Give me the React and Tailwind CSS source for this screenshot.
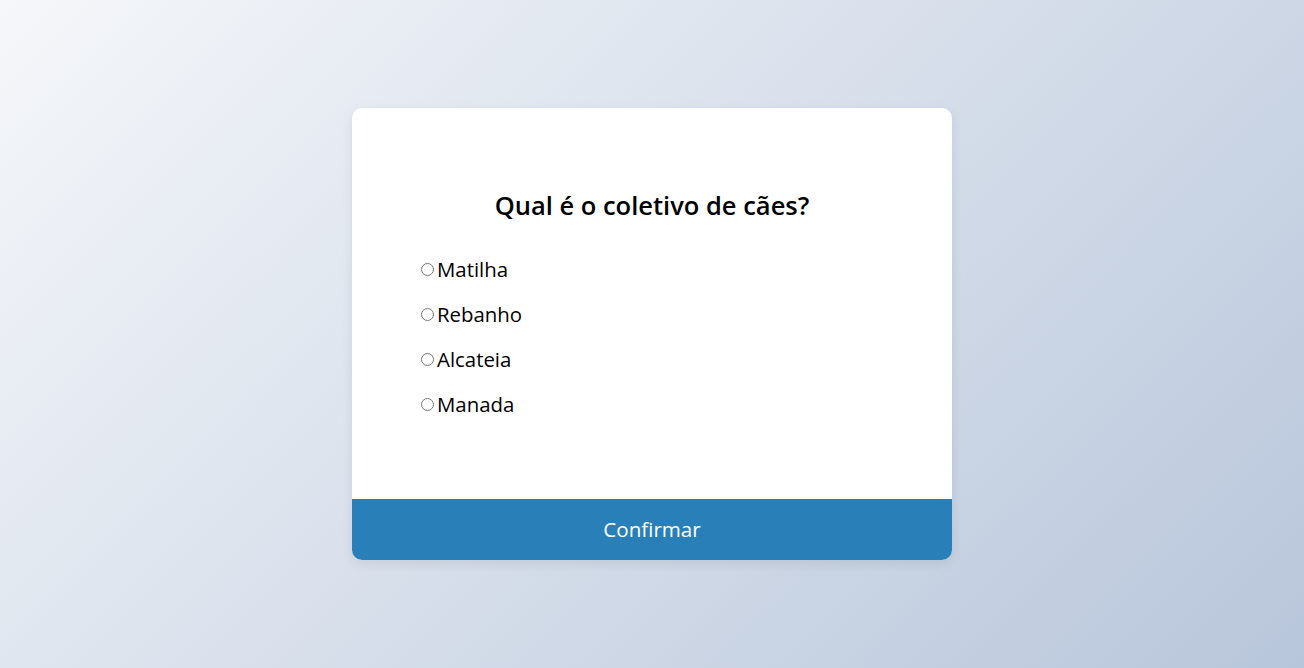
import React from "react";

const options = ["Matilha", "Rebanho", "Alcateia", "Manada"];

export default function App() {
  return (
    <div
      className="min-h-screen w-full flex items-center justify-center bg-[linear-gradient(135deg,#f5f7fa_0%,#b8c6db_100%)]"
      style={{ fontFamily: '"Open Sans", "Liberation Sans", sans-serif' }}
    >
      <div className="w-[600px] h-[452px] bg-white rounded-[10px] overflow-hidden flex flex-col shadow-[0_4px_12px_rgba(0,0,0,0.08)]">
        <div className="flex-1 pt-[79px] px-[64px]">
          <h2 className="text-center text-[25.5px] leading-[36px] font-semibold text-black">
            Qual é o coletivo de cães?
          </h2>
          <ul className="mt-[24px] flex flex-col">
            {options.map((o) => (
              <li key={o} className="h-[45px] flex items-center">
                <label className="flex items-center text-[20.4px] text-black cursor-pointer">
                  <input type="radio" name="q" className="m-0 ml-[5px] mr-[3px] w-[13px] h-[13px]" />
                  {o}
                </label>
              </li>
            ))}
          </ul>
        </div>
        <button className="h-[61px] w-full bg-[#2980b9] text-white text-[20.6px] flex items-center justify-center">
          Confirmar
        </button>
      </div>
    </div>
  );
}
